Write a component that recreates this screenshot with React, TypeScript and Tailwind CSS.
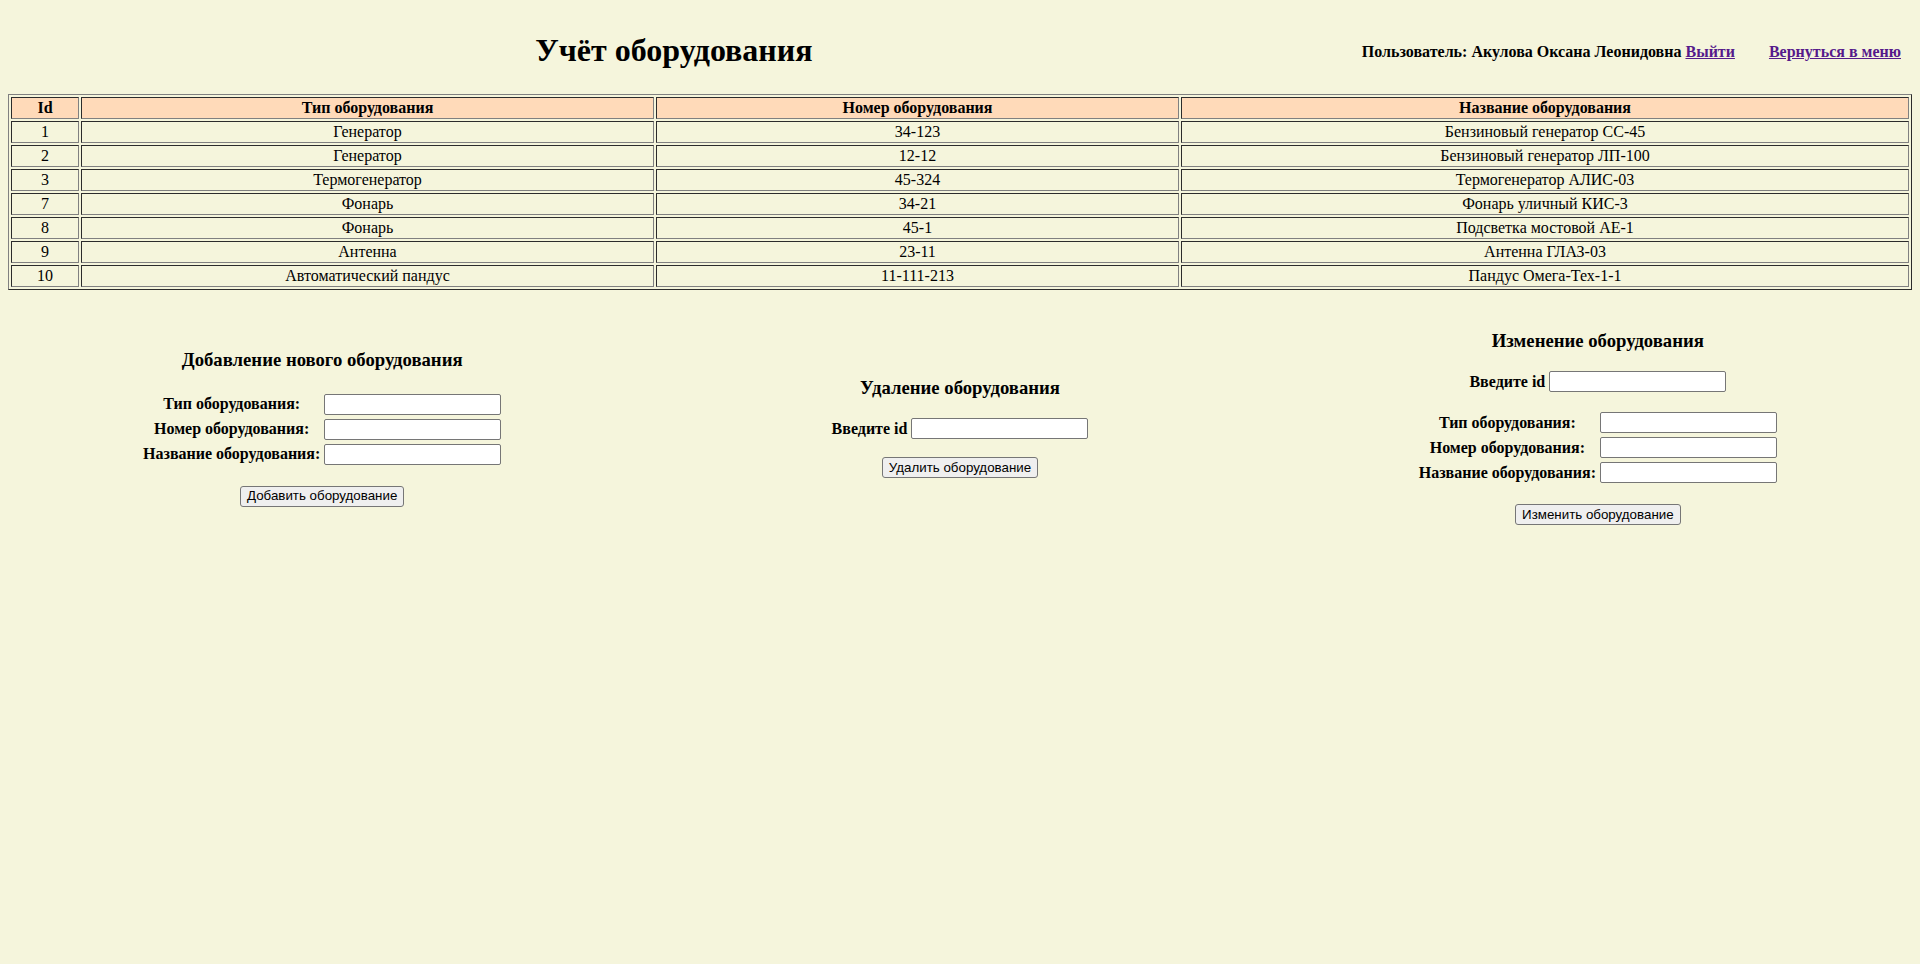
const rows = [
  { id: 1, type: "Генератор", num: "34-123", name: "Бензиновый генератор СС-45" },
  { id: 2, type: "Генератор", num: "12-12", name: "Бензиновый генератор ЛП-100" },
  { id: 3, type: "Термогенератор", num: "45-324", name: "Термогенератор АЛИС-03" },
  { id: 7, type: "Фонарь", num: "34-21", name: "Фонарь уличный КИС-3" },
  { id: 8, type: "Фонарь", num: "45-1", name: "Подсветка мостовой АЕ-1" },
  { id: 9, type: "Антенна", num: "23-11", name: "Антенна ГЛАЗ-03" },
  { id: 10, type: "Автоматический пандус", num: "11-111-213", name: "Пандус Омега-Тех-1-1" },
]

const cell = "border border-[grey] [border-style:inset] p-px text-center"

function Input() {
  return (
    <input
      type="text"
      className="block w-[177px] h-[21px] bg-white border border-[#767676] rounded-[2px] px-[2px] font-['Liberation_Sans',sans-serif] text-[13.33px]"
    />
  )
}

function Button({ children }: { children: string }) {
  return (
    <button className="mt-[18px] h-[21px] px-[6px] bg-[#efefef] border border-[#767676] rounded-[3px] font-['Liberation_Sans',sans-serif] text-[13.33px] text-black leading-none">
      {children}
    </button>
  )
}

function Fields() {
  const labels = ["Тип оборудования:", "Номер оборудования:", "Название оборудования:"]
  return (
    <table className="border-separate border-spacing-[2px]">
      <tbody>
        {labels.map((l) => (
          <tr key={l}>
            <th className="p-px text-center font-bold align-middle">{l}</th>
            <td className="p-px">
              <Input />
            </td>
          </tr>
        ))}
      </tbody>
    </table>
  )
}

function IdRow() {
  return (
    <div className="flex items-center gap-[4px]">
      <b>Введите id</b>
      <Input />
    </div>
  )
}

export default function App() {
  return (
    <div className="min-h-screen bg-[#f5f5dc] p-2 text-black text-base leading-[normal] font-['Liberation_Serif',serif]">
      <header className="flex items-center pt-[24px]">
        <h1 className="flex-1 mr-[22px] text-center text-[32px] font-bold">Учёт оборудования</h1>
        <div className="font-bold mr-[11px] mt-[3px]">
          Пользователь: Акулова Оксана Леонидовна{" "}
          <a href="#" className="text-[#551a8b] underline">Выйти</a>
          <a href="#" className="ml-[34px] text-[#551a8b] underline">Вернуться в меню</a>
        </div>
      </header>

      <table className="mt-[25px] w-full table-fixed border-separate border-spacing-[2px] border border-[grey] [border-style:outset]">
        <thead>
          <tr className="bg-[#ffdab9]">
            <th className={`${cell} w-[68px] font-bold`}>Id</th>
            <th className={`${cell} w-[573px] font-bold`}>Тип оборудования</th>
            <th className={`${cell} w-[523px] font-bold`}>Номер оборудования</th>
            <th className={`${cell} font-bold`}>Название оборудования</th>
          </tr>
        </thead>
        <tbody>
          {rows.map((r) => (
            <tr key={r.id}>
              <td className={cell}>{r.id}</td>
              <td className={cell}>{r.type}</td>
              <td className={cell}>{r.num}</td>
              <td className={cell}>{r.name}</td>
            </tr>
          ))}
        </tbody>
      </table>

      <div className="mt-[40px] flex justify-between items-center">
        <div className="w-[33%] flex flex-col items-center">
          <h3 className="text-[18.72px] font-bold">Добавление нового оборудования</h3>
          <div className="mt-[20px]">
            <Fields />
          </div>
          <Button>Добавить оборудование</Button>
        </div>

        <div className="w-[33%] flex flex-col items-center">
          <h3 className="text-[18.72px] font-bold">Удаление оборудования</h3>
          <div className="mt-[19px]">
            <IdRow />
          </div>
          <Button>Удалить оборудование</Button>
        </div>

        <div className="w-[33%] flex flex-col items-center">
          <h3 className="text-[18.72px] font-bold">Изменение оборудования</h3>
          <div className="mt-[19px]">
            <IdRow />
          </div>
          <div className="mt-[17px]">
            <Fields />
          </div>
          <Button>Изменить оборудование</Button>
        </div>
      </div>
    </div>
  )
}
